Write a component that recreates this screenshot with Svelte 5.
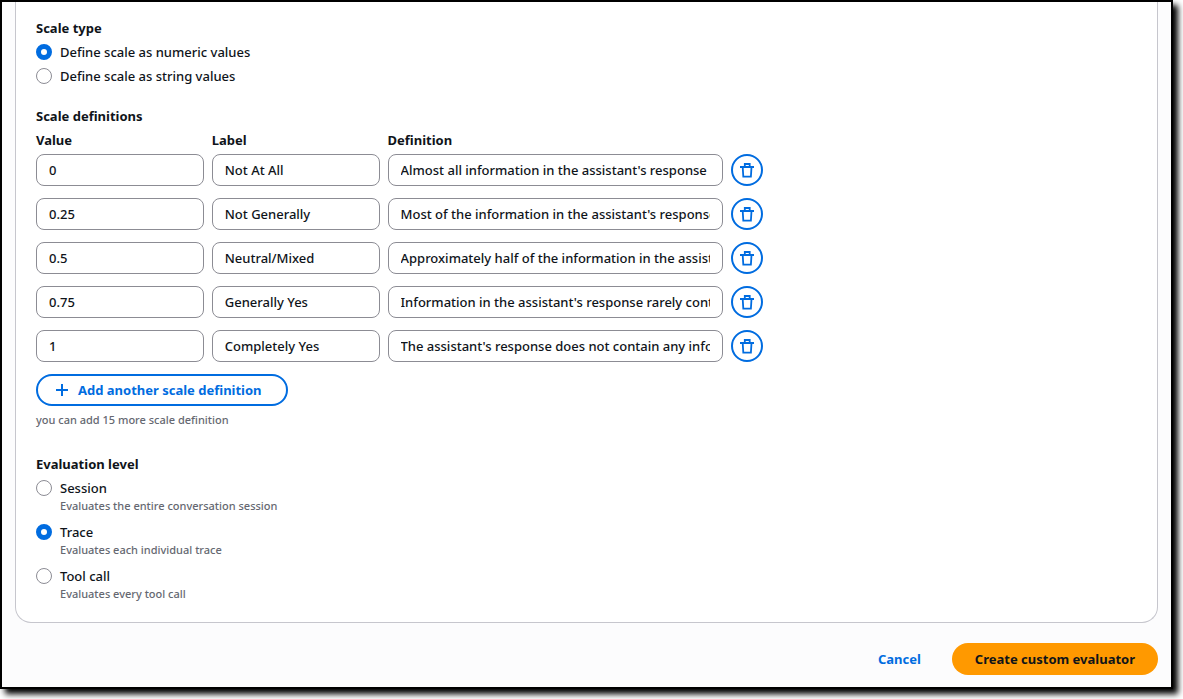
<script lang="ts">
	type ScaleRow = { value: string; label: string; definition: string };

	const MAX_DEFINITIONS = 20;

	const scaleTypes = [
		{ key: 'numeric', text: 'Define scale as numeric values' },
		{ key: 'string', text: 'Define scale as string values' }
	];

	const levels = [
		{ key: 'session', text: 'Session', description: 'Evaluates the entire conversation session' },
		{ key: 'trace', text: 'Trace', description: 'Evaluates each individual trace' },
		{ key: 'tool', text: 'Tool call', description: 'Evaluates every tool call' }
	];

	let scaleType = $state('numeric');
	let level = $state('trace');
	let rows = $state<ScaleRow[]>([
		{
			value: '0',
			label: 'Not At All',
			definition: "Almost all information in the assistant's response"
		},
		{
			value: '0.25',
			label: 'Not Generally',
			definition: "Most of the information in the assistant's response"
		},
		{
			value: '0.5',
			label: 'Neutral/Mixed',
			definition: 'Approximately half of the information in the assistant'
		},
		{
			value: '0.75',
			label: 'Generally Yes',
			definition: "Information in the assistant's response rarely contradicts"
		},
		{
			value: '1',
			label: 'Completely Yes',
			definition: "The assistant's response does not contain any information"
		}
	]);

	let remaining = $derived(MAX_DEFINITIONS - rows.length);

	function addRow() {
		if (remaining > 0) rows.push({ value: '', label: '', definition: '' });
	}

	function removeRow(index: number) {
		rows.splice(index, 1);
	}
</script>

<main class="window">
	<form class="page" onsubmit={(e) => e.preventDefault()}>
		<div class="card">
			<fieldset class="field">
				<legend>Scale type</legend>
				<div class="options">
					{#each scaleTypes as option}
						<label class="option">
							<input type="radio" name="scale-type" value={option.key} bind:group={scaleType} />
							<span>{option.text}</span>
						</label>
					{/each}
				</div>
			</fieldset>

			<fieldset class="field">
				<legend>Scale definitions</legend>
				<div class="grid headings">
					<span id="col-value">Value</span>
					<span id="col-label">Label</span>
					<span id="col-definition">Definition</span>
				</div>
				<div class="rows">
					{#each rows as row, i}
						<div class="grid">
							<input class="text" type="text" aria-labelledby="col-value" bind:value={row.value} />
							<input class="text" type="text" aria-labelledby="col-label" bind:value={row.label} />
							<input
								class="text"
								type="text"
								aria-labelledby="col-definition"
								bind:value={row.definition}
							/>
							<button
								class="remove"
								type="button"
								aria-label="Remove definition {i + 1}"
								onclick={() => removeRow(i)}
							>
								<svg viewBox="0 0 16 16" width="16" height="16" aria-hidden="true">
									<path d="M1 5h14M5.8 5V2h4.9v3M3.7 5l.6 9.7h7.6l.6-9.7" />
								</svg>
							</button>
						</div>
					{/each}
				</div>
				<button class="add" type="button" onclick={addRow}>
					<svg viewBox="0 0 16 16" width="16" height="16" aria-hidden="true">
						<path d="M8 2v12M2 8h12" />
					</svg>
					Add another scale definition
				</button>
				<p class="hint">you can add {remaining} more scale definition</p>
			</fieldset>

			<fieldset class="field">
				<legend>Evaluation level</legend>
				<div class="options spaced">
					{#each levels as option}
						<label class="option">
							<input type="radio" name="level" value={option.key} bind:group={level} />
							<span>
								{option.text}
								<small>{option.description}</small>
							</span>
						</label>
					{/each}
				</div>
			</fieldset>
		</div>

		<div class="actions">
			<button class="cancel" type="button">Cancel</button>
			<button class="create" type="submit">Create custom evaluator</button>
		</div>
	</form>
</main>

<style>
	:global(body) {
		background: #fff;
	}

	.window {
		margin: 0 10px 10px 0;
		border: 2px solid #000;
		background: #fcfcfd;
		box-shadow: 5px 5px 6px #000;
		color: #0f141a;
		font-family: 'Noto Sans', 'Open Sans', sans-serif;
		font-size: 13px;
		font-weight: 500;
		line-height: 20px;
	}

	.page {
		padding: 0 13px 12px;
	}

	.card {
		display: flex;
		flex-direction: column;
		gap: 20px;
		padding: 16px 20px 20px;
		border: 1px solid #c6c6cd;
		border-top: 0;
		border-radius: 0 0 16px 16px;
		background: #fff;
	}

	.field {
		min-width: 0;
		margin: 0;
		padding: 0;
		border: 0;
	}

	legend,
	.headings {
		padding: 0;
		font-weight: 700;
	}

	legend {
		margin-bottom: 4px;
	}

	.options {
		display: flex;
		flex-direction: column;
		gap: 4px;
	}

	.spaced {
		gap: 8px;
	}

	.option {
		display: flex;
		align-items: flex-start;
		gap: 8px;
	}

	input[type='radio'] {
		appearance: none;
		box-sizing: border-box;
		flex-shrink: 0;
		width: 16px;
		height: 16px;
		margin: 2px 0;
		border: 1px solid #8c8c94;
		border-radius: 50%;
		background: #fff;
	}

	input[type='radio']:checked {
		border: 5px solid #006ce0;
	}

	small,
	.hint {
		color: #656871;
		font-size: 11px;
		line-height: 16px;
	}

	small {
		display: block;
	}

	.grid {
		display: grid;
		grid-template-columns: 1fr 1fr 2fr 32px;
		gap: 8px;
		max-width: 727px;
	}

	.headings {
		margin-bottom: 4px;
	}

	.rows {
		display: flex;
		flex-direction: column;
		gap: 12px;
	}

	.text {
		box-sizing: border-box;
		width: 100%;
		min-width: 0;
		height: 32px;
		padding: 4px 12px;
		border: 1px solid #8c8c94;
		border-radius: 8px;
		background: #fff;
		color: inherit;
		font: inherit;
	}

	button {
		box-sizing: border-box;
		height: 32px;
		border: 2px solid transparent;
		border-radius: 20px;
		background: transparent;
		color: #006ce0;
		font: inherit;
		font-weight: 700;
		cursor: pointer;
	}

	svg {
		fill: none;
		stroke: currentColor;
		stroke-width: 2;
	}

	.remove {
		display: flex;
		align-items: center;
		justify-content: center;
		padding: 0;
		border-color: #006ce0;
	}

	.remove svg {
		stroke-width: 1.8;
	}

	.add {
		display: flex;
		align-items: center;
		gap: 8px;
		margin-top: 12px;
		padding: 0 24px 0 16px;
		border-color: #006ce0;
	}

	.hint {
		margin: 6px 0;
	}

	.actions {
		display: flex;
		justify-content: flex-end;
		gap: 8px;
		margin-top: 20px;
	}

	.cancel,
	.create {
		padding: 0 21px;
	}

	.create {
		background: #ff9900;
		color: #0f141a;
	}
</style>
